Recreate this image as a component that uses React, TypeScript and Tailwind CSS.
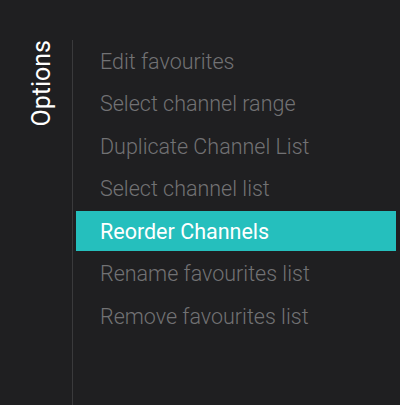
import React from 'react';

const items = [
  'Edit favourites',
  'Select channel range',
  'Duplicate Channel List',
  'Select channel list',
  'Reorder Channels',
  'Rename favourites list',
  'Remove favourites list',
];

const selected = 4;

export default function App() {
  return (
    <div
      className="flex h-[405px] w-[400px] overflow-hidden bg-[#1f1f21]"
      style={{ fontFamily: 'Roboto, "Liberation Sans", sans-serif' }}
    >
      {/* side title */}
      <div className="flex w-[72px] justify-start pt-10 pl-[27px]">
        <div className="h-fit rotate-180 text-[25px] leading-[30px] text-white [writing-mode:vertical-rl]">
          Options
        </div>
      </div>

      {/* menu */}
      <div className="mt-10 flex flex-1 flex-col border-l border-[#3a3a3c] pt-px pl-[3px] pr-1">
        <div className="flex flex-col gap-[2.5px]">
          {items.map((label, i) => (
            <div
              key={label}
              className={
                i === selected
                  ? 'flex h-10 items-center bg-[#25bfbd] pt-[2px] pl-6 text-[21.5px] font-normal text-white'
                  : 'flex h-10 items-center pt-[2px] pl-6 text-[21.5px] font-light text-[#727274]'
              }
            >
              {label}
            </div>
          ))}
        </div>
      </div>
    </div>
  );
}
